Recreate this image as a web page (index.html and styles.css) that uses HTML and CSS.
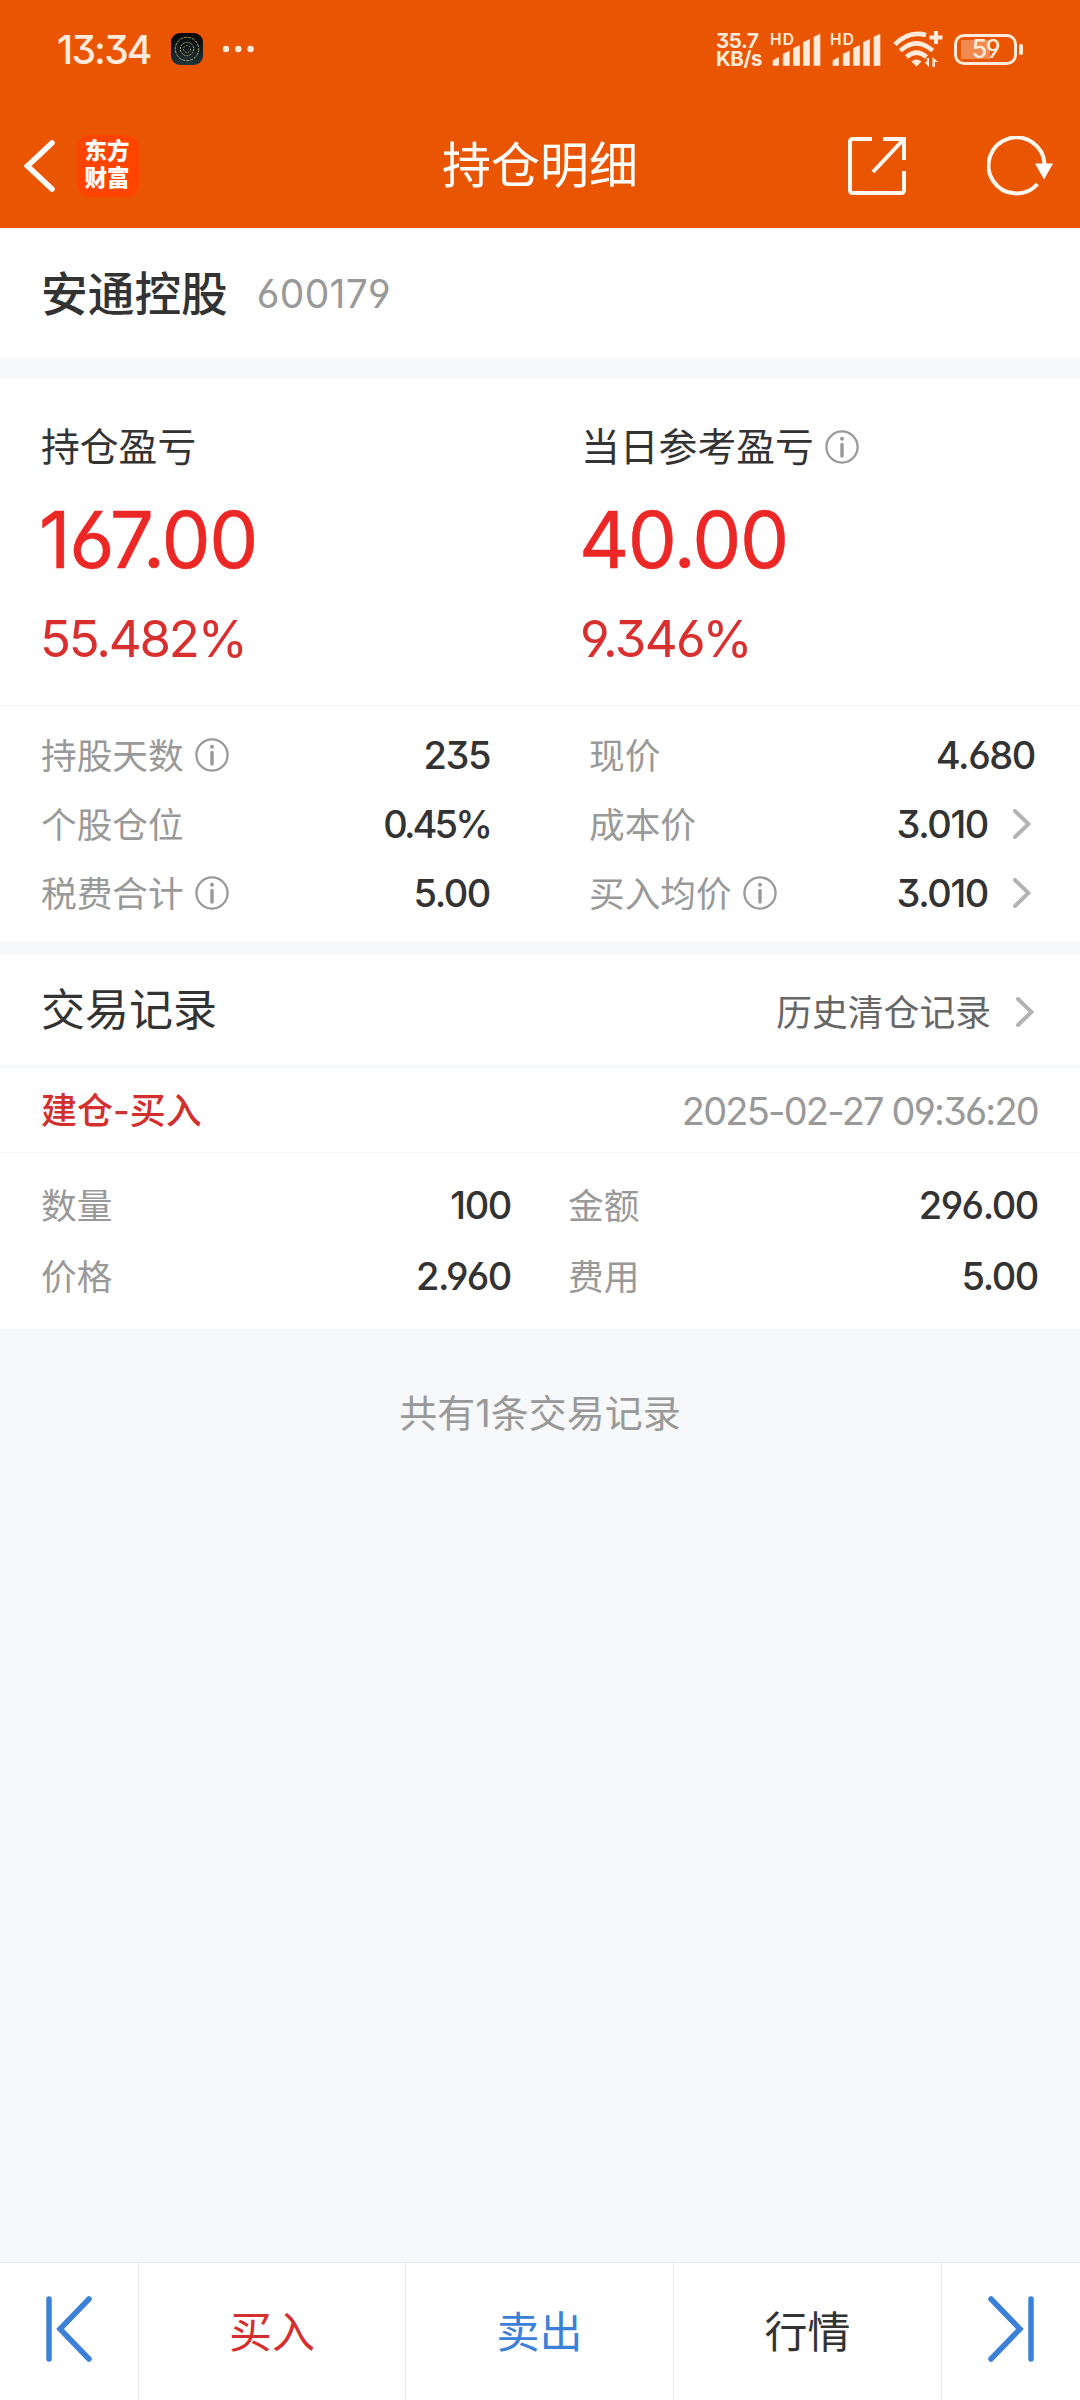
FILE: index.html
```html
<!DOCTYPE html>
<html lang="zh-CN">
<head>
<meta charset="utf-8">
<title>持仓明细</title>
<link rel="stylesheet" href="styles.css">
</head>
<body>
<svg class="defs" width="0" height="0">
  <symbol id="info" viewBox="0 0 34 34"><circle cx="17" cy="17" r="15.6" fill="none" stroke="currentColor" stroke-width="2.3"/><circle cx="17" cy="8.8" r="2" fill="currentColor"/><path d="M17 14.4V26" stroke="currentColor" stroke-width="3.4" stroke-linecap="round"/></symbol>
  <symbol id="next" viewBox="0 0 18 30"><path d="M2 2l13.500 13L2 28" fill="none" stroke="currentColor" stroke-width="4" stroke-linecap="round"/></symbol>
  <symbol id="signal" viewBox="0 0 52 36"><path d="M3 34.500V29.500L8.600 26.600V34.500ZM13.300 34.500V23L19.300 20.200V34.500ZM23.500 34.500V17.300L29.500 14.600V34.500ZM33.500 34.500V11.300L39.500 8.600V34.500ZM44 34.500V6L50 3.200V34.500Z" fill="currentColor" stroke="currentColor" stroke-width=".6" stroke-linejoin="round"/></symbol>
</svg>
<header class="top">
  <div class="status">
    <span class="clock">13:34</span>
    <svg class="app" viewBox="0 0 32 32"><defs><linearGradient id="g" x2="0" y2="1"><stop stop-color="#040404"/><stop offset="1" stop-color="#20343a"/></linearGradient></defs><rect width="32" height="32" rx="9" fill="url(#g)"/><g fill="none" stroke="#a9a16a" stroke-width="1"><circle cx="16" cy="16" r="11.700" stroke-dasharray="3 1"/><circle cx="16" cy="16" r="6.700" stroke-dasharray="2 1"/><circle cx="16" cy="16" r="3.500" stroke-dasharray="1.500 1.500"/></g></svg>
    <svg class="dots" viewBox="0 0 32 8"><g fill="currentColor"><circle cx="4" cy="4" r="3.200"/><circle cx="16.300" cy="4" r="3.200"/><circle cx="28.600" cy="4" r="3.200"/></g></svg>
    <div class="speed"><span>35.7</span><span>KB/s</span></div>
    <svg class="signal" viewBox="0 0 52 36"><text class="hd" x="0" y="14" textLength="24">HD</text><use href="#signal"/></svg>
    <svg class="signal" viewBox="0 0 52 36"><text class="hd" x="0" y="14" textLength="24">HD</text><use href="#signal"/></svg>
    <svg class="wifi" viewBox="0 0 50 38">
      <g fill="none" stroke="currentColor" stroke-width="4.600">
        <path d="M2 14.500Q15.500.500 33 5"/><path d="M7.300 20.600Q23.500 6 39.700 20.600"/><path d="M13.500 27Q23.500 18.400 33.500 27"/>
        <path d="M43 1v13M36.500 7.500h13" stroke-width="4"/>
      </g>
      <path d="M18.500 31.500Q23.500 27.500 28.500 31.500L23.500 36.500ZM36 28v9l-4.500-5h2.300v-4ZM39.500 37v-10l5.500 5h-3v5Z" fill="currentColor"/>
    </svg>
    <div class="battery"><span class="cell">59</span><i></i></div>
  </div>
  <nav class="titlebar">
    <svg class="back" viewBox="0 0 31 52"><path d="M28 3L3.500 26L28 49" fill="none" stroke="#fff" stroke-width="5.500" stroke-linecap="round"/></svg>
    <div class="logo"><span>东方</span><span>财富</span></div>
    <h1>持仓明细</h1>
    <svg class="share" viewBox="0 0 60 60"><path d="M25 3H6Q3 3 3 6V54Q3 57 6 57H54Q57 57 57 54V35M36 3H57V24M56 4L26 36" fill="none" stroke="#fff8f0" stroke-width="4"/></svg>
    <svg class="reload" viewBox="0 0 66 60"><path d="M50.500 48A28 28 0 1 1 57.500 28" fill="none" stroke="#fff8f0" stroke-width="4"/><path d="M48 27.500H66L57 43.500Z" fill="#fff"/></svg>
  </nav>
</header>
<main>
  <section class="stock"><h2>安通控股</h2><span class="num">600179</span></section>
  <section class="profit">
    <div><h3>持仓盈亏</h3><p class="amount tight">167.00</p><p class="rate">55.482%</p></div>
    <div><h3>当日参考盈亏<svg class="info"><use href="#info"/></svg></h3><p class="amount">40.00</p><p class="rate rate2">9.346%</p></div>
  </section>
  <section class="facts">
    <dl>
      <div><dt>持股天数<svg class="info"><use href="#info"/></svg></dt><dd>235</dd></div>
      <div><dt>个股仓位</dt><dd class="percent">0.45%</dd></div>
      <div><dt>税费合计<svg class="info"><use href="#info"/></svg></dt><dd>5.00</dd></div>
    </dl>
    <dl>
      <div><dt>现价</dt><dd>4.680</dd></div>
      <div><dt>成本价</dt><dd>3.010<svg class="next"><use href="#next"/></svg></dd></div>
      <div><dt>买入均价<svg class="info"><use href="#info"/></svg></dt><dd>3.010<svg class="next"><use href="#next"/></svg></dd></div>
    </dl>
  </section>
  <section class="records">
    <div class="heading"><h2>交易记录</h2><a><span>历史清仓记录</span><svg class="next"><use href="#next"/></svg></a></div>
    <div class="trade"><b>建仓-买入</b><time>2025-02-27 09:36:20</time></div>
    <div class="facts detail">
      <dl><div><dt>数量</dt><dd>100</dd></div><div><dt>价格</dt><dd>2.960</dd></div></dl>
      <dl><div><dt>金额</dt><dd>296.00</dd></div><div><dt>费用</dt><dd>5.00</dd></div></dl>
    </div>
  </section>
  <p class="total">共有1条交易记录</p>
</main>
<footer class="bar">
  <a><svg class="jump" viewBox="0 0 46 66"><path d="M3 3V63M43 3L14 33L43 63" fill="none" stroke="#3c80d8" stroke-width="5.500" stroke-linecap="round"/></svg></a>
  <a class="buy">买入</a><a class="sell">卖出</a><a>行情</a>
  <a><svg class="jump" viewBox="0 0 46 66"><path d="M43 3V63M3 3L32 33L3 63" fill="none" stroke="#3c80d8" stroke-width="5.500" stroke-linecap="round"/></svg></a>
</footer>
</body>
</html>
```
FILE: styles.css
```css
* { box-sizing: border-box; margin: 0; padding: 0; }
body {
  width: 1080px; height: 2400px; display: flex; flex-direction: column;
  background: #f7f8fa; color: #333; overflow: hidden;
  font-family: Inter, "Noto Sans CJK SC", sans-serif;
  font-feature-settings: "cv03", "cv04", "cv09";
}
svg { flex: none; display: block; }
.defs { position: absolute; }
h1, h2, h3, b { font-weight: 400; }

.top { height: 228px; background: #ea5502; color: #ffeadb; }
.status { height: 98px; display: flex; align-items: center; padding: 0 57px; }
.clock { font-size: 39px; font-weight: 500; width: 114px; letter-spacing: -1.8px; }
.app { width: 32px; height: 32px; }
.dots { width: 32px; height: 8px; margin-left: 19px; }
.speed { margin-left: auto; width: 54px; display: flex; flex-direction: column; font-size: 20.500px; font-weight: 700; line-height: 18px; padding-top: 2px; letter-spacing: -.4px; }
.signal { width: 52px; height: 36px; margin-right: 8px; }
.hd { font-size: 15.500px; font-weight: 600; fill: currentColor; }
.wifi { width: 50px; height: 38px; margin-left: 3px; }
.battery { display: flex; align-items: center; gap: 2px; margin-left: 11px; }
.cell {
  width: 63px; height: 31px; border: 3.500px solid; border-radius: 10px; text-align: center;
  font-size: 25px; line-height: 25px; font-weight: 500; letter-spacing: -1.5px;
  background: linear-gradient(#f28a50, #f28a50) 4px center / 29px 19px no-repeat;
}
.battery i { width: 4px; height: 11px; border-radius: 2px; background: currentColor; }
.titlebar { height: 130px; display: flex; align-items: center; padding: 5px 27px 0 24px; }
.back { width: 31px; height: 52px; }
.logo {
  width: 62px; height: 62px; margin-left: 22px; border-radius: 13px; background: #ff4400; color: #fff;
  display: flex; flex-direction: column; align-items: center; justify-content: center;
  font-size: 22.500px; line-height: 27px; font-weight: 900; padding: 0 2px 3px 0;
}
h1 { flex: 1; text-align: center; color: #fff; font-size: 49px; line-height: 72px; padding-left: 94px; }
.share { width: 60px; height: 60px; }
.reload { width: 66px; height: 60px; margin-left: 80px; }

.stock { height: 130px; background: #fff; display: flex; align-items: center; gap: 29px; padding-left: 41px; }
.stock h2 { font-size: 46.700px; font-weight: 500; padding-bottom: 6px; }
.num { font-size: 39px; color: #999; letter-spacing: .3px; }
.profit { height: 327px; margin-top: 21px; background: #fff; border-bottom: 1px solid #f5f6f8; display: flex; padding: 42px 0 0 41px; }
.profit > div { width: 540px; flex: none; }
.profit h3 { display: flex; align-items: center; font-size: 38.800px; line-height: 52px; }
.info { width: 34px; height: 34px; margin-left: 11px; color: #999; }
.amount { font-size: 78px; line-height: 94px; margin-top: 20px; margin-left: -2px; color: #eb2826; letter-spacing: -1.600px; -webkit-text-stroke: .5px; }
.tight { letter-spacing: -1.600px; }
.rate { font-size: 51px; line-height: 62px; margin-top: 21px; margin-left: -1px; color: #d92f2f; letter-spacing: -2.200px; }
.rate2 { letter-spacing: -1.600px; }
.facts { height: 235px; display: grid; grid-template-columns: 449px 446px; gap: 99px; padding: 15px 42px 0 41px; background: #fff; }
.facts dl > div { height: 69px; display: flex; align-items: center; justify-content: space-between; }
.facts dt { display: flex; align-items: center; font-size: 35.700px; color: #999; padding-bottom: 4px; }
.facts dt .info { position: relative; top: 1px; }
.facts dd { display: flex; align-items: center; font-size: 38px; font-weight: 500; letter-spacing: -1.400px; padding-bottom: 1px; }
.facts dd.percent { letter-spacing: -2.900px; }
.next { width: 18px; height: 30px; margin-left: 25px; margin-right: 4px; color: #b3b3b3; }
.records { margin-top: 14px; background: #fff; }
.heading { height: 114px; border-bottom: 4px solid #f6f7f8; display: flex; align-items: center; justify-content: space-between; padding: 0 42px 0 41px; }
.heading h2 { font-size: 44px; padding-bottom: 6px; }
.heading a { display: flex; align-items: center; font-size: 35.800px; color: #666; padding-top: 3px; }
.heading span { padding-bottom: 3px; }
.trade { height: 84px; border-bottom: 1px solid #f5f6f8; display: flex; align-items: center; justify-content: space-between; padding: 0 42px 0 41px; }
.trade b { font-size: 36px; font-weight: 500; color: #d32f2f; padding-bottom: 5px; }
.trade time { font-size: 38px; color: #999; letter-spacing: -1.800px; }
.detail { height: 176px; padding-top: 17px; grid-template-columns: 470px 470px; gap: 57px; }
.detail dl > div { height: 71px; }
.total { text-align: center; font-size: 38px; line-height: 56px; margin-top: 56px; color: #999; }
.bar { margin-top: auto; height: 138px; border-top: 1px solid #ececec; background: #fff; display: grid; grid-template-columns: 138px 267px 268px 268px 139px; }
.bar a { display: flex; align-items: center; justify-content: center; font-size: 43px; padding-bottom: 5px; }
.bar a + a { border-left: 1px solid #ececec; }
.jump { width: 46px; height: 66px; }
.bar .buy { color: #d32f2f; }
.bar .sell { color: #3c80d8; }
```
